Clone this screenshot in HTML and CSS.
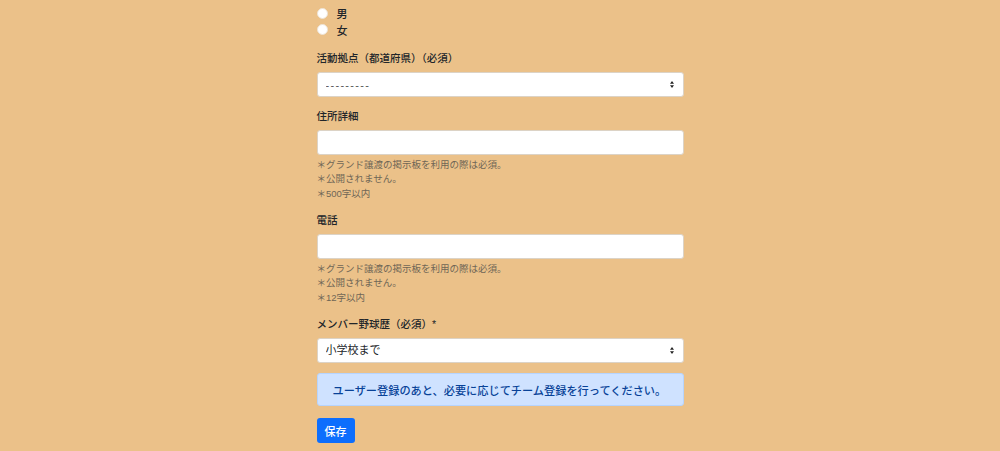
FILE: index.html
```html
<!DOCTYPE html>
<html lang="ja">
<head>
    <meta charset="utf-8">
    <title>ユーザー登録</title>
    <link rel="stylesheet" href="styles.css">
</head>
<body>
    <form class="form">
        <div class="group radios">
            <label class="radio"><input type="radio" name="sex" value="m"> 男</label>
            <label class="radio"><input type="radio" name="sex" value="f"> 女</label>
        </div>

        <div class="group">
            <label class="form-label" for="pref">活動拠点（都道府県）（必須）</label>
            <select class="form-select empty" id="pref">
                <option>---------</option>
            </select>
        </div>

        <div class="group">
            <label class="form-label" for="address">住所詳細</label>
            <input class="form-control" type="text" id="address">
            <div class="form-text">
                ＊グランド譲渡の掲示板を利用の際は必須。<br>
                ＊公開されません。<br>
                ＊500字以内
            </div>
        </div>

        <div class="group">
            <label class="form-label" for="tel">電話</label>
            <input class="form-control" type="text" id="tel">
            <div class="form-text">
                ＊グランド譲渡の掲示板を利用の際は必須。<br>
                ＊公開されません。<br>
                ＊12字以内
            </div>
        </div>

        <div class="group">
            <label class="form-label" for="career">メンバー野球歴（必須）*</label>
            <select class="form-select" id="career">
                <option>小学校まで</option>
                <option>中学校まで</option>
                <option>高校まで</option>
            </select>
        </div>

        <div class="alert">ユーザー登録のあと、必要に応じてチーム登録を行ってください。</div>

        <button type="submit" class="btn">保存</button>
    </form>
</body>
</html>
```

FILE: styles.css
```css
body {
    margin: 0;
    background-color: #ebc189;
    color: #212529;
    font-family: "Liberation Sans", "Noto Sans CJK JP", sans-serif;
    font-size: 10.5px;
}
.form {
    width: 367px;
    margin: 0 auto;
    padding-top: 5px;
}
.group {
    margin-bottom: 10.5px;
}
.radios {
    margin-bottom: 12px;
}
.radio {
    display: flex;
    align-items: center;
    gap: 9px;
    height: 16.5px;
    font-size: 11px;
    font-weight: 500;
}
.radio input {
    appearance: none;
    -webkit-appearance: none;
    width: 11px;
    height: 11px;
    margin: 0;
    border-radius: 50%;
    background: #fff;
    border: 1px solid #eee4d6;
}
.form-label {
    display: block;
    line-height: 16px;
    margin-bottom: 6px;
    font-weight: 500;
}
.form-select, .form-control {
    display: block;
    box-sizing: border-box;
    width: 100%;
    height: 25px;
    margin: 0;
    padding: 0 8px;
    border: 1px solid #dcd3c6;
    border-radius: 3px;
    background-color: #fff;
    color: #212529;
    font-family: inherit;
    font-size: 11px;
}
.form-select {
    appearance: none;
    -webkit-appearance: none;
    background-image: url("data:image/svg+xml,%3csvg xmlns='http://www.w3.org/2000/svg' viewBox='0 0 4 7'%3e%3cpath fill='%23222' d='M2 0L0 2.8h4zm0 7L0 4.2h4z'/%3e%3c/svg%3e");
    background-repeat: no-repeat;
    background-position: right 9px center;
    background-size: 4px 7px;
}
.form-select.empty {
    letter-spacing: 1.3px;
    color: #555;
}
.form-text {
    margin-top: 3px;
    color: #6f6656;
    font-size: 9.5px;
    line-height: 14.5px;
}
.alert {
    box-sizing: border-box;
    height: 33px;
    margin-top: 2px;
    margin-bottom: 12px;
    padding: 0 15px;
    display: flex;
    align-items: center;
    background-color: #cfe2ff;
    border: 1px solid #b6d4fe;
    border-radius: 3px;
    color: #084298;
    font-size: 11.2px;
    font-weight: 500;
}
.btn {
    height: 25px;
    padding: 0 8px;
    border: none;
    border-radius: 3px;
    background-color: #0d6efd;
    color: #fff;
    font-family: inherit;
    font-size: 11px;
    font-weight: 500;
    cursor: pointer;
}
```
